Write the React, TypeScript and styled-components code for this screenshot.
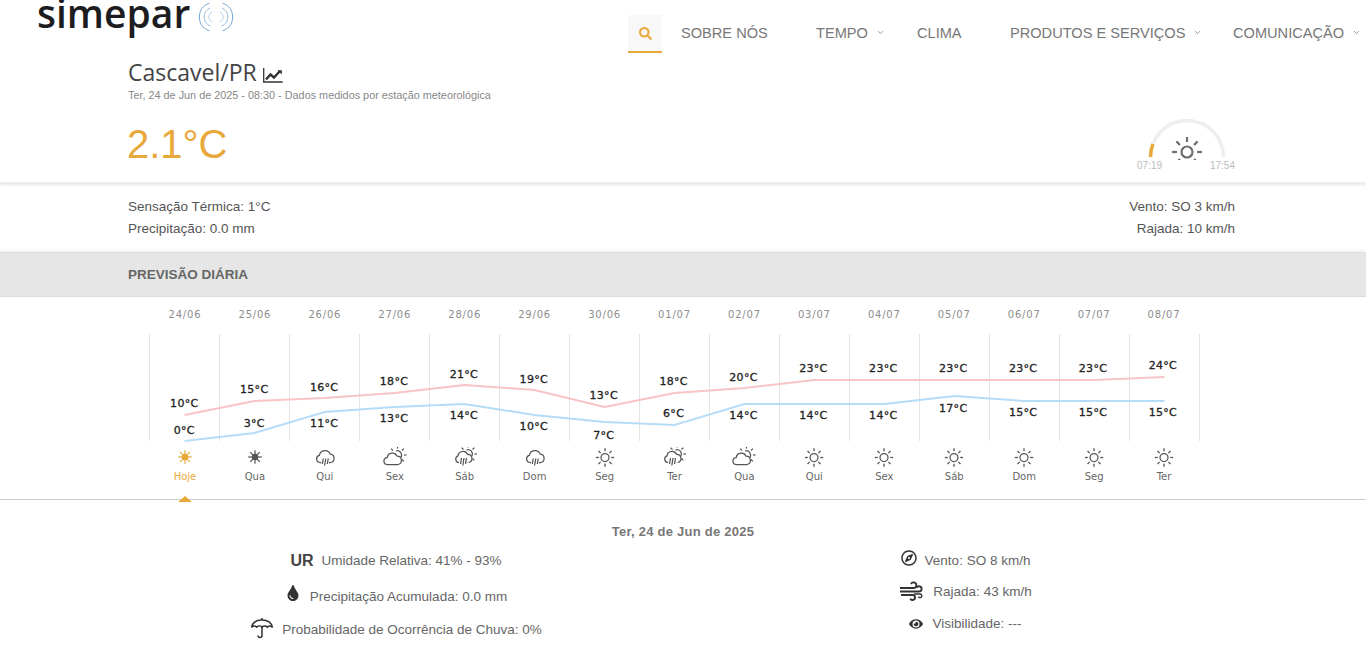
import { ReactNode } from "react";
import styled, { createGlobalStyle } from "styled-components";
import { FaEye, FaRegCompass, FaSearch, FaTint } from "react-icons/fa";
import { FiChevronDown } from "react-icons/fi";

const GlobalStyle = createGlobalStyle`
  html, body {
    margin: 0;
    background: #fff;
    font-family: "Liberation Sans", Arial, sans-serif;
    overflow: hidden;
  }
`;

const ORANGE = "#e8a93a";

/* header */
const Header = styled.header`
  display: flex;
  justify-content: space-between;
  height: 53px;
  padding-left: 37px;
`;

const Logo = styled.div`
  display: flex;
  align-items: flex-start;
  gap: 8px;
  height: 36px;
`;

const LogoText = styled.span`
  font-family: "Open Sans", sans-serif;
  font-size: 39px;
  font-weight: 600;
  line-height: 26px;
  color: #1d1d1f;
  letter-spacing: 0;
`;

const Nav = styled.nav`
  display: flex;
  align-items: flex-start;
  padding-top: 15px;
  width: 738px;
`;

const SearchBox = styled.div`
  width: 34px;
  height: 36px;
  background: #f8f8f8;
  border-bottom: 2px solid ${ORANGE};
  display: flex;
  align-items: center;
  justify-content: center;
  color: ${ORANGE};
  font-size: 13px;
  margin-right: 19px;
`;

const NavItem = styled.a<{ $width: number }>`
  display: flex;
  align-items: center;
  gap: 8px;
  width: ${({ $width }) => $width}px;
  height: 35px;
  flex: none;
  font-size: 14.6px;
  color: #777;
  white-space: nowrap;
`;

/* current conditions */
const Hero = styled.section`
  display: flex;
  justify-content: space-between;
  height: 129px;
  padding: 0 131px 0 128px;
  border-bottom: 1px solid #eee;
  box-shadow: 0 2px 3px rgba(0, 0, 0, 0.1);
`;

const Title = styled.h1`
  display: flex;
  align-items: center;
  gap: 6px;
  margin: 6px 0 0;
  font-family: "Open Sans", sans-serif;
  font-size: 23px;
  line-height: 26px;
  font-weight: 400;
  color: #444;
`;

const Subtitle = styled.p`
  margin: 4px 0 0;
  font-size: 10.85px;
  line-height: 12px;
  color: #888;
`;

const Temperature = styled.div`
  margin-top: 18px;
  margin-left: -1px;
  font-size: 40px;
  line-height: 50px;
  color: ${ORANGE};
`;

const SunWidget = styled.div`
  width: 100px;
  margin-top: 63px;
`;

const SunTimes = styled.div`
  display: flex;
  justify-content: space-between;
  padding-left: 2px;
  font-size: 10px;
  line-height: 12px;
  color: #bbb;
`;

const SunArc = styled.svg`
  display: block;
`;

const Stats = styled.section`
  display: flex;
  justify-content: space-between;
  height: 69px;
  padding: 13px 131px 0 128px;
  box-sizing: border-box;
  font-size: 13.5px;
  line-height: 22px;
  color: #555;
`;

const RightStats = styled.div`
  text-align: right;
`;

const Band = styled.h2`
  margin: 0;
  height: 43px;
  padding-left: 128px;
  background: #e6e6e6;
  border-top: 1px solid #ddd;
  border-bottom: 1px solid #ddd;
  box-shadow: 0 -2px 3px rgba(0, 0, 0, 0.05);
  font-size: 13.5px;
  line-height: 43px;
  font-weight: 700;
  color: #666;
`;

/* forecast */
const Forecast = styled.section`
  position: relative;
  height: 202px;
  padding-left: 150px;
  border-bottom: 1px solid #ccc;
`;

const DayGrid = styled.div`
  display: grid;
  grid-template-columns: repeat(15, 1fr);
  width: 1049px;
  font-family: "DejaVu Sans", sans-serif;
  text-align: center;
`;

const DateLabel = styled.div`
  padding-top: 11px;
  height: 26px;
  font-size: 10px;
  line-height: 13px;
  letter-spacing: 0.8px;
  color: #8c8c8c;
`;

const ChartWrap = styled.div`
  margin-left: -1px;
  height: 110px;
  svg {
    display: block;
  }
  text {
    font-family: "DejaVu Sans", sans-serif;
    font-size: 11px;
    fill: #222;
    stroke: #222;
    stroke-width: 0.3px;
    letter-spacing: 0.3px;
    text-anchor: middle;
  }
`;

const DayCell = styled.div<{ $active?: boolean }>`
  position: relative;
  height: 58px;
  padding-top: 3px;
  box-sizing: border-box;
  color: ${({ $active }) => ($active ? ORANGE : "#666")};
  font-size: 10px;
  line-height: 12px;
  svg {
    display: block;
    margin: 0 auto 3px;
  }
`;

const Marker = styled.span`
  position: absolute;
  left: 28px;
  bottom: 0;
  width: 0;
  height: 0;
  border-left: 7px solid transparent;
  border-right: 7px solid transparent;
  border-bottom: 6px solid ${ORANGE};
`;

/* day detail */
const DetailTitle = styled.div`
  padding-top: 24px;
  height: 44px;
  box-sizing: border-box;
  text-align: center;
  font-size: 13px;
  line-height: 15px;
  letter-spacing: 0.25px;
  font-weight: 700;
  color: #777;
`;

const DetailColumns = styled.div`
  display: grid;
  grid-template-columns: 564px 575px;
  padding-left: 114px;
`;

const DetailRow = styled.div<{ $height: number; $gap?: number }>`
  display: flex;
  align-items: center;
  justify-content: center;
  gap: ${({ $gap }) => $gap ?? 8}px;
  height: ${({ $height }) => $height}px;
  font-size: 13.5px;
  color: #666;
`;

const RowIcon = styled.span<{ $lift: number; $size: number }>`
  display: flex;
  font-size: ${({ $size }) => $size}px;
  color: #333;
  margin-bottom: ${({ $lift }) => $lift}px;
`;

const UrMark = styled.b`
  font-size: 16px;
  color: #444;
`;

/* drawn icons */
const Rays = ({ cx, cy, r1, r2, color, width = 1.2, from = 0, to = 360 }: {
  cx: number; cy: number; r1: number; r2: number; color: string; width?: number; from?: number; to?: number;
}) => (
  <>
    {[0, 45, 90, 135, 180, 225, 270, 315].filter((a) => a >= from && a <= to).map((a) => {
      const t = (a * Math.PI) / 180;
      return (
        <line
          key={a}
          x1={cx + r1 * Math.cos(t)}
          y1={cy + r1 * Math.sin(t)}
          x2={cx + r2 * Math.cos(t)}
          y2={cy + r2 * Math.sin(t)}
          stroke={color}
          strokeWidth={width}
        />
      );
    })}
  </>
);

const IconSvg = ({ children, color = "#555" }: { children: ReactNode; color?: string }) => (
  <svg width="24" height="21" viewBox="0 0 24 21" fill="none" stroke={color} strokeWidth="1.25">
    {children}
  </svg>
);

const SunIcon = () => (
  <IconSvg>
    <circle cx="12" cy="10.5" r="4" />
    <Rays cx={12} cy={10.5} r1={6.2} r2={9.2} color="#555" width={1.3} />
  </IconSvg>
);

const ClearNightIcon = ({ color }: { color: string }) => (
  <IconSvg color={color}>
    <circle cx="12" cy="10" r="2.6" fill={color} />
    <Rays cx={12} cy={10} r1={1.5} r2={6.8} color={color} />
  </IconSvg>
);

const RainIcon = () => (
  <IconSvg>
    <path d="M8 15.500H7a3.600 3.600 0 0 1-.6-7.100 5.700 5.700 0 0 1 10.900-1.200 4.200 4.200 0 0 1 .4 8.300H16" />
    <path d="M10.300 11.500l-1 5.500M12.800 11.500l-1.200 7M15.300 11.500l-1 5.500" />
  </IconSvg>
);

const CloudSunIcon = () => (
  <IconSvg>
    <path d="M13 4a4.200 4.200 0 0 1 3.600 7.500" />
    <Rays cx={14.5} cy={8} r1={6.4} r2={9} color="#555" from={0} to={315} />
    <path d="M4.500 17.500a3.400 3.400 0 0 1-.3-6.800 5.200 5.200 0 0 1 9.900-1.500 4.200 4.200 0 0 1 1 8.300z" fill="#fff" />
  </IconSvg>
);

const CloudSunRainIcon = () => (
  <IconSvg>
    <path d="M13.500 3a4.200 4.200 0 0 1 3.300 7.800" />
    <Rays cx={15} cy={7} r1={6.400} r2={9} color="#555" from={0} to={315} />
    <path d="M6 15.500a3.400 3.400 0 0 1-1-6.600 5 5 0 0 1 9.500-1.600 4.200 4.200 0 0 1 1.500 8.200" fill="#fff" />
    <path d="M8.500 11l-1 6M11 11l-1.200 7.500M13.500 11l-1 6" />
  </IconSvg>
);

const LogoMark = () => (
  <svg width="36" height="34" viewBox="0 0 38 34" fill="none" stroke="#6f9fd0" strokeWidth="1">
    <path d="M12 2.500C4 5 1.500 11 1.500 17s2.500 12 10.500 14.500M26 2.500C34 5 36.500 11 36.500 17s-2.500 12-10.500 14.500" />
    <path d="M13 7.500C8.500 9.500 6.500 13 6.500 17s2 7.500 6.500 9.500M25 7.500c4.500 2 6.500 5.500 6.500 9.500s-2 7.500-6.500 9.500" stroke="#8fb5dc" />
    <path d="M15 11.500c-2 1.200-3.500 3-3.500 5.500s1.500 4.300 3.500 5.500M23 11.500c2 1.200 3.500 3 3.500 5.500s-1.500 4.300-3.500 5.500" stroke="#b3cce6" />
  </svg>
);

const TrendIcon = () => (
  <svg width="20" height="16" viewBox="0 0 20 16" fill="none" stroke="#333" style={{ marginTop: 5 }}>
    <path d="M.7 1v14h19" strokeWidth="1.300" />
    <path d="M3 12.500l4.500-5 3.500 3 6-6.500" strokeWidth="2.400" />
    <path d="M14.500 3.200h4.300v4.300z" fill="#333" strokeWidth="0" />
  </svg>
);

const UmbrellaIcon = () => (
  <svg width="24" height="22" viewBox="0 0 24 22" fill="none" stroke="#333" strokeWidth="1.5">
    <path d="M1.500 10.500C2.500 5.500 6.500 3 12 3s9.500 2.500 10.500 7.500c-1.500-1.800-3.500-2-5.200-.4-1.500-1.500-3.800-1.500-5.300 0-1.500-1.500-3.800-1.500-5.300 0-1.700-1.600-3.700-1.400-5.200.4z" />
    <path d="M12 1v2M12 10v8.500a2 2 0 0 1-4 0" />
  </svg>
);

const WindIcon = () => (
  <svg width="26" height="20" viewBox="0 0 26 20" fill="none" stroke="#333" strokeWidth="1.900">
    <path d="M1 7h13.500a2.800 2.800 0 1 0-2.500-4" />
    <path d="M1 10.500h19a2.600 2.600 0 1 0-2.300-3.800" />
    <path d="M2 14h11.500a2.500 2.500 0 1 1-2.200 3.600" />
    <path d="M15 13h6a1.800 1.800 0 1 1-1.600 2.600" strokeWidth="1.400" />
  </svg>
);

/* data */
type Weather = "sun" | "clear" | "rain" | "cloudsun" | "cloudrain";

const days: {
  date: string; name: string; icon: Weather;
  max: number; maxY: number; maxLabelY: number;
  min: number; minY: number; minLabelY: number;
}[] = [
  { date: "24/06", name: "Hoje", icon: "clear", max: 10, maxY: 415, maxLabelY: 403, min: 0, minY: 441, minLabelY: 430 },
  { date: "25/06", name: "Qua", icon: "clear", max: 15, maxY: 401, maxLabelY: 389, min: 3, minY: 433, minLabelY: 423 },
  { date: "26/06", name: "Qui", icon: "rain", max: 16, maxY: 398, maxLabelY: 387, min: 11, minY: 412, minLabelY: 423 },
  { date: "27/06", name: "Sex", icon: "cloudsun", max: 18, maxY: 393, maxLabelY: 381, min: 13, minY: 407, minLabelY: 418 },
  { date: "28/06", name: "Sáb", icon: "cloudrain", max: 21, maxY: 385, maxLabelY: 374, min: 14, minY: 404, minLabelY: 415 },
  { date: "29/06", name: "Dom", icon: "rain", max: 19, maxY: 390, maxLabelY: 379, min: 10, minY: 415, minLabelY: 426 },
  { date: "30/06", name: "Seg", icon: "sun", max: 13, maxY: 407, maxLabelY: 395, min: 7, minY: 422, minLabelY: 435 },
  { date: "01/07", name: "Ter", icon: "cloudrain", max: 18, maxY: 393, maxLabelY: 381, min: 6, minY: 425, minLabelY: 413 },
  { date: "02/07", name: "Qua", icon: "cloudsun", max: 20, maxY: 388, maxLabelY: 377, min: 14, minY: 404, minLabelY: 415 },
  { date: "03/07", name: "Qui", icon: "sun", max: 23, maxY: 380, maxLabelY: 368, min: 14, minY: 404, minLabelY: 415 },
  { date: "04/07", name: "Sex", icon: "sun", max: 23, maxY: 380, maxLabelY: 368, min: 14, minY: 404, minLabelY: 415 },
  { date: "05/07", name: "Sáb", icon: "sun", max: 23, maxY: 380, maxLabelY: 368, min: 17, minY: 396, minLabelY: 408 },
  { date: "06/07", name: "Dom", icon: "sun", max: 23, maxY: 380, maxLabelY: 368, min: 15, minY: 401, minLabelY: 412 },
  { date: "07/07", name: "Seg", icon: "sun", max: 23, maxY: 380, maxLabelY: 368, min: 15, minY: 401, minLabelY: 412 },
  { date: "08/07", name: "Ter", icon: "sun", max: 24, maxY: 377, maxLabelY: 365, min: 15, minY: 401, minLabelY: 412 },
];

const CHART_TOP = 334;
const lineX = (i: number) => 35.5 + i * 70;
const labelX = (i: number) => 35.3 + i * 69.9;

const WeatherIcon = ({ kind, active }: { kind: Weather; active: boolean }) => {
  if (kind === "clear") return <ClearNightIcon color={active ? ORANGE : "#555"} />;
  if (kind === "rain") return <RainIcon />;
  if (kind === "cloudsun") return <CloudSunIcon />;
  if (kind === "cloudrain") return <CloudSunRainIcon />;
  return <SunIcon />;
};

const TempChart = () => (
  <ChartWrap>
    <svg width="1052" height="110" viewBox="0 0 1052 110">
      {Array.from({ length: 16 }, (_, i) => (
        <line key={i} x1={0.5 + i * 70} y1="0" x2={0.5 + i * 70} y2="107" stroke="#e4e4e4" />
      ))}
      <polyline
        fill="none"
        stroke="#f9c4c6"
        strokeWidth="2"
        points={days.map((d, i) => `${lineX(i)},${d.maxY - CHART_TOP}`).join(" ")}
      />
      <polyline
        fill="none"
        stroke="#b6dcf8"
        strokeWidth="2"
        points={days.map((d, i) => `${lineX(i)},${d.minY - CHART_TOP}`).join(" ")}
      />
      {days.map((d, i) => (
        <g key={d.date}>
          <text x={labelX(i)} y={d.maxLabelY - CHART_TOP + 4}>{d.max}°C</text>
          <text x={labelX(i)} y={d.minLabelY - CHART_TOP + 4}>{d.min}°C</text>
        </g>
      ))}
    </svg>
  </ChartWrap>
);

export default function App() {
  return (
    <>
      <GlobalStyle />
      <Header>
        <Logo>
          <LogoText>simepar</LogoText>
          <LogoMark />
        </Logo>
        <Nav>
          <SearchBox><FaSearch /></SearchBox>
          <NavItem $width={135}>SOBRE NÓS</NavItem>
          <NavItem $width={101}>TEMPO <FiChevronDown size={9} /></NavItem>
          <NavItem $width={93}>CLIMA</NavItem>
          <NavItem $width={223}>PRODUTOS E SERVIÇOS <FiChevronDown size={9} /></NavItem>
          <NavItem $width={133}>COMUNICAÇÃO <FiChevronDown size={9} /></NavItem>
        </Nav>
      </Header>

      <Hero>
        <div>
          <Title>Cascavel/PR <TrendIcon /></Title>
          <Subtitle>Ter, 24 de Jun de 2025 - 08:30 - Dados medidos por estação meteorológica</Subtitle>
          <Temperature>2.1°C</Temperature>
        </div>
        <SunWidget>
          <SunArc width="100" height="44" viewBox="0 0 100 44" fill="none">
            <path d="M15.500 41a36.500 36.500 0 0 1 73 0" stroke="#eeeeee" strokeWidth="3.500" />
            <path d="M15.500 41a36.500 36.500 0 0 1 2.400-13" stroke={ORANGE} strokeWidth="3.500" />
            <circle cx="52" cy="36" r="5.500" stroke="#6f6f6f" strokeWidth="2.200" />
            <Rays cx={52} cy={36} r1={10} r2={15} color="#6f6f6f" width={2.2} />
          </SunArc>
          <SunTimes><span>07:19</span><span>17:54</span></SunTimes>
        </SunWidget>
      </Hero>

      <Stats>
        <div>
          <div>Sensação Térmica: 1°C</div>
          <div>Precipitação: 0.0 mm</div>
        </div>
        <RightStats>
          <div>Vento: SO 3 km/h</div>
          <div>Rajada: 10 km/h</div>
        </RightStats>
      </Stats>

      <Band>PREVISÃO DIÁRIA</Band>

      <Forecast>
        <DayGrid>
          {days.map((d) => <DateLabel key={d.date}>{d.date}</DateLabel>)}
        </DayGrid>
        <TempChart />
        <DayGrid>
          {days.map((d, i) => (
            <DayCell key={d.date} $active={i === 0}>
              <WeatherIcon kind={d.icon} active={i === 0} />
              {d.name}
              {i === 0 && <Marker />}
            </DayCell>
          ))}
        </DayGrid>
      </Forecast>

      <section>
        <DetailTitle>Ter, 24 de Jun de 2025</DetailTitle>
        <DetailColumns>
          <div>
            <DetailRow $height={33}><UrMark>UR</UrMark> Umidade Relativa: 41% - 93%</DetailRow>
            <DetailRow $height={39} $gap={9}>
              <RowIcon $size={16} $lift={7}><FaTint /></RowIcon>
              Precipitação Acumulada: 0.0 mm
            </DetailRow>
            <DetailRow $height={27} $gap={8}>
              <RowIcon $size={24} $lift={3}><UmbrellaIcon /></RowIcon>
              Probabilidade de Ocorrência de Chuva: 0%
            </DetailRow>
          </div>
          <div>
            <DetailRow $height={33} $gap={8}>
              <RowIcon $size={16} $lift={5}><FaRegCompass /></RowIcon>
              Vento: SO 8 km/h
            </DetailRow>
            <DetailRow $height={29} $gap={8}>
              <RowIcon $size={24} $lift={1}><WindIcon /></RowIcon>
              Rajada: 43 km/h
            </DetailRow>
            <DetailRow $height={35} $gap={9}>
              <RowIcon $size={14} $lift={0}><FaEye /></RowIcon>
              Visibilidade: ---
            </DetailRow>
          </div>
        </DetailColumns>
      </section>
    </>
  );
}
